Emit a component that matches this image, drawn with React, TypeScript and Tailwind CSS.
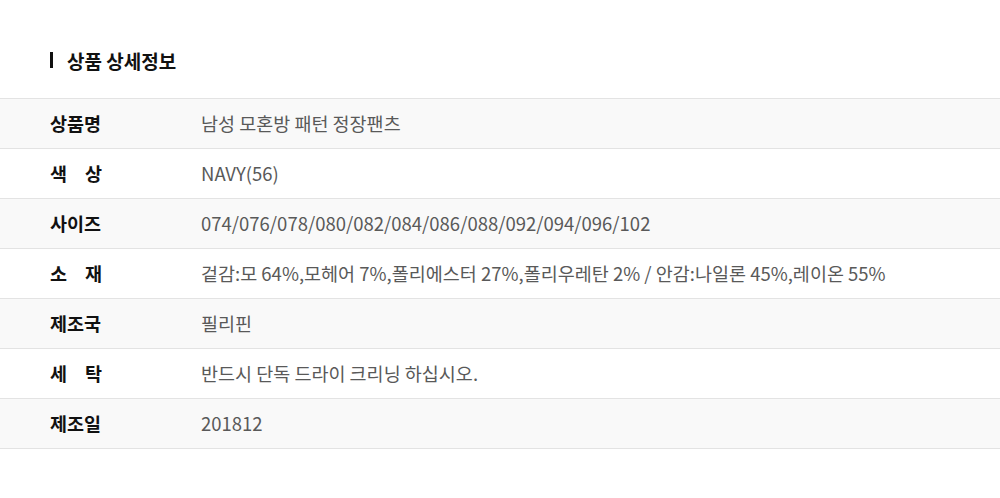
import React from "react";

const Spread = ({ a, b }: { a: string; b: string }) => (
  <span className="flex w-[52px] justify-between">
    <span>{a}</span>
    <span>{b}</span>
  </span>
);

const rows: { label: React.ReactNode; value: string }[] = [
  { label: "상품명", value: "남성 모혼방 패턴 정장팬츠" },
  { label: <Spread a="색" b="상" />, value: "NAVY(56)" },
  { label: "사이즈", value: "074/076/078/080/082/084/086/088/092/094/096/102" },
  { label: <Spread a="소" b="재" />, value: "겉감:모 64%,모헤어 7%,폴리에스터 27%,폴리우레탄 2% / 안감:나일론 45%,레이온 55%" },
  { label: "제조국", value: "필리핀" },
  { label: <Spread a="세" b="탁" />, value: "반드시 단독 드라이 크리닝 하십시오." },
  { label: "제조일", value: "201812" },
];

export default function App() {
  return (
    <div className="w-[1000px] h-[498px] bg-white font-['Noto_Sans_CJK_KR','Noto_Sans',sans-serif]">
      <div className="flex items-center pl-[50px] h-[98px] pt-[22px]">
        <div className="w-[3px] h-[16px] bg-[#111]" />
        <h2 className="ml-[14px] text-[19px] font-bold text-[#111] leading-none">상품 상세정보</h2>
      </div>
      <div className="border-t border-[#e3e3e3]">
        {rows.map((r, i) => (
          <div
            key={i}
            className={`flex items-center h-[50px] border-b border-[#e3e3e3] ${i % 2 === 0 ? "bg-[#f9f9f9]" : "bg-white"}`}
          >
            <div className="w-[201px] shrink-0 pl-[50px] text-[18.5px] font-bold text-[#111]">{r.label}</div>
            <div className="text-[18.5px] text-[#595959] whitespace-nowrap">{r.value}</div>
          </div>
        ))}
      </div>
    </div>
  );
}
